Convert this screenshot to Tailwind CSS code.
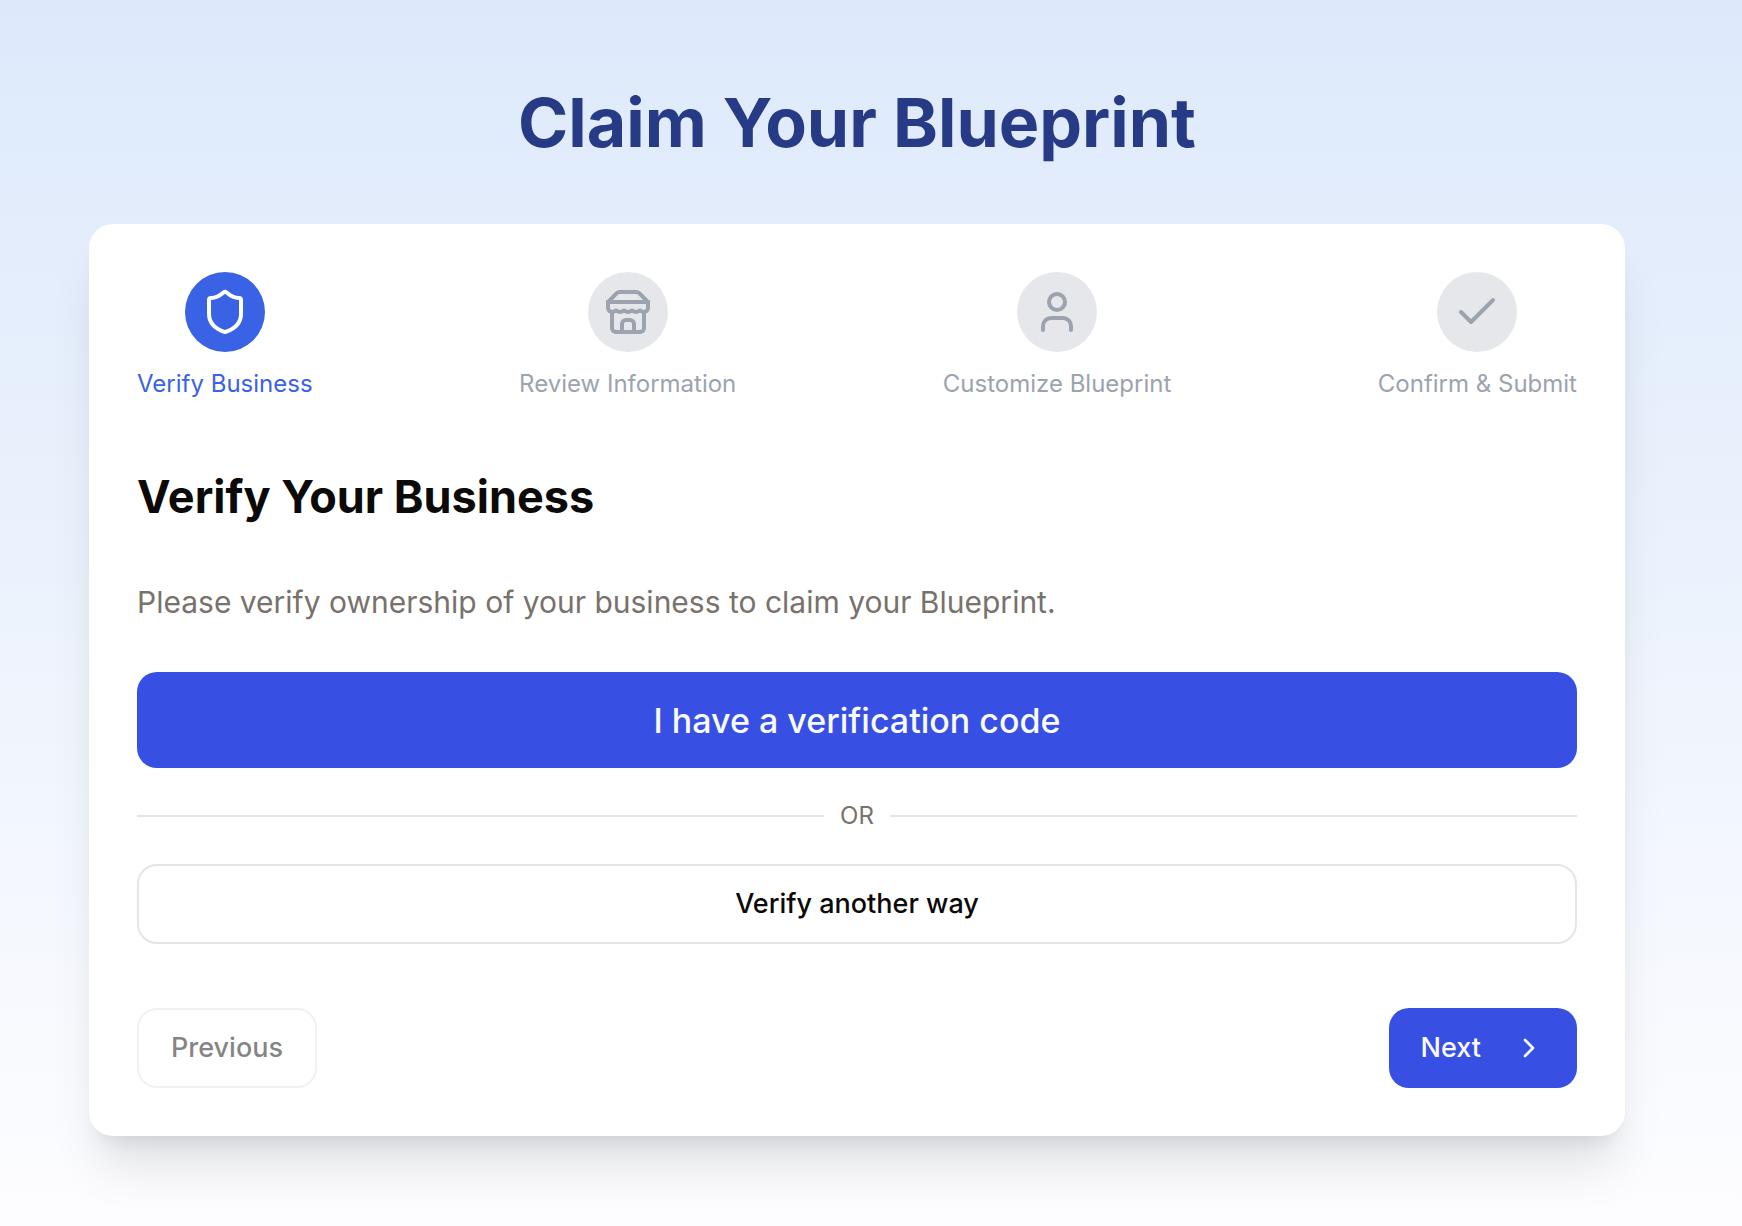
<!DOCTYPE html>
<html lang="en">
<head>
<meta charset="utf-8">
<meta name="viewport" content="width=device-width, initial-scale=1">
<title>Claim Your Blueprint</title>
<script src="https://cdn.jsdelivr.net/npm/@tailwindcss/browser@4"></script>
</head>
<body class="min-h-screen bg-linear-to-b/srgb from-[#dde9fb] to-[#fdfdff] font-['Inter',sans-serif] text-[#0c0a09]">
<main class="mx-auto w-full max-w-[1592px] pt-20 pb-20 pr-10 pl-4 min-[1600px]:pr-[42px] min-[1600px]:pl-[14px]">
  <h1 class="mb-[60px] text-center text-[68px] leading-[84px] font-bold text-[#263a85]">Claim Your Blueprint</h1>

  <section class="rounded-3xl bg-white p-12 shadow-[0_40px_50px_-10px_rgba(0,0,0,0.1),0_16px_20px_-12px_rgba(0,0,0,0.1)]">
    <ol class="flex justify-between text-2xl leading-8 text-[#9ca3af]">
      <li class="flex flex-col items-center gap-4 text-[#3963e4]" aria-current="step">
        <span class="flex size-20 items-center justify-center rounded-full bg-[#3963e4] text-white">
          <svg class="size-12" viewBox="0 0 24 24" fill="none" stroke="currentColor" stroke-width="2" stroke-linecap="round" stroke-linejoin="round" aria-hidden="true"><path d="M20 13c0 5-3.5 7.5-7.66 8.95a1 1 0 0 1-.67-.01C7.5 20.5 4 18 4 13V6a1 1 0 0 1 1-1c2 0 4.5-1.2 6.24-2.72a1.17 1.17 0 0 1 1.52 0C14.51 3.81 17 5 19 5a1 1 0 0 1 1 1z"/></svg>
        </span>
        <span>Verify Business</span>
      </li>
      <li class="flex flex-col items-center gap-4">
        <span class="flex size-20 items-center justify-center rounded-full bg-[#e5e7eb]">
          <svg class="size-12" viewBox="0 0 24 24" fill="none" stroke="currentColor" stroke-width="2" stroke-linecap="round" stroke-linejoin="round" aria-hidden="true"><path d="m2 7 4.41-4.41A2 2 0 0 1 7.83 2h8.34a2 2 0 0 1 1.42.59L22 7"/><path d="M4 12v8a2 2 0 0 0 2 2h12a2 2 0 0 0 2-2v-8"/><path d="M15 22v-4a2 2 0 0 0-2-2h-2a2 2 0 0 0-2 2v4"/><path d="M2 7h20"/><path d="M22 7v3a2 2 0 0 1-2 2a2.7 2.7 0 0 1-1.59-.63.7.7 0 0 0-.82 0A2.7 2.7 0 0 1 16 12a2.7 2.7 0 0 1-1.59-.63.7.7 0 0 0-.82 0A2.7 2.7 0 0 1 12 12a2.7 2.7 0 0 1-1.59-.63.7.7 0 0 0-.82 0A2.7 2.7 0 0 1 8 12a2.7 2.7 0 0 1-1.59-.63.7.7 0 0 0-.82 0A2.7 2.7 0 0 1 4 12a2 2 0 0 1-2-2V7"/></svg>
        </span>
        <span>Review Information</span>
      </li>
      <li class="flex flex-col items-center gap-4">
        <span class="flex size-20 items-center justify-center rounded-full bg-[#e5e7eb]">
          <svg class="size-12" viewBox="0 0 24 24" fill="none" stroke="currentColor" stroke-width="2" stroke-linecap="round" stroke-linejoin="round" aria-hidden="true"><path d="M19 21v-2a4 4 0 0 0-4-4H9a4 4 0 0 0-4 4v2"/><circle cx="12" cy="7" r="4"/></svg>
        </span>
        <span>Customize Blueprint</span>
      </li>
      <li class="flex flex-col items-center gap-4">
        <span class="flex size-20 items-center justify-center rounded-full bg-[#e5e7eb]">
          <svg class="size-12" viewBox="0 0 24 24" fill="none" stroke="currentColor" stroke-width="2" stroke-linecap="round" stroke-linejoin="round" aria-hidden="true"><path d="M20 6 9 17l-5-5"/></svg>
        </span>
        <span>Confirm &amp; Submit</span>
      </li>
    </ol>

    <h2 class="mt-[72px] mb-14 text-[45px] leading-[50px] font-bold">Verify Your Business</h2>
    <p class="mb-[46px] text-[30px] leading-12 text-[#78716c]">Please verify ownership of your business to claim your Blueprint.</p>

    <button type="button" class="h-24 w-full rounded-[20px] bg-[#3750e3] text-[34px] font-medium text-[#f8fafc]">I have a verification code</button>

    <div class="my-8 flex items-center gap-4 text-2xl leading-8 text-[#78716c]">
      <span class="h-0.5 flex-1 bg-[#e5e5e5]"></span>
      <span>OR</span>
      <span class="h-0.5 flex-1 bg-[#e5e5e5]"></span>
    </div>

    <button type="button" class="h-20 w-full rounded-[20px] border-2 border-[#e5e5e5] bg-white text-[27px] font-medium">Verify another way</button>

    <div class="mt-16 flex justify-between text-[27px] font-medium">
      <button type="button" disabled class="h-20 rounded-[20px] border-2 border-[#e5e5e5] bg-white px-8 opacity-50">Previous</button>
      <button type="button" class="flex h-20 items-center gap-8 rounded-[20px] bg-[#3750e3] px-8 text-[#f8fafc]">
        Next
        <svg class="size-8" viewBox="0 0 24 24" fill="none" stroke="currentColor" stroke-width="2" stroke-linecap="round" stroke-linejoin="round" aria-hidden="true"><path d="m9 18 6-6-6-6"/></svg>
      </button>
    </div>
  </section>
</main>
</body>
</html>
